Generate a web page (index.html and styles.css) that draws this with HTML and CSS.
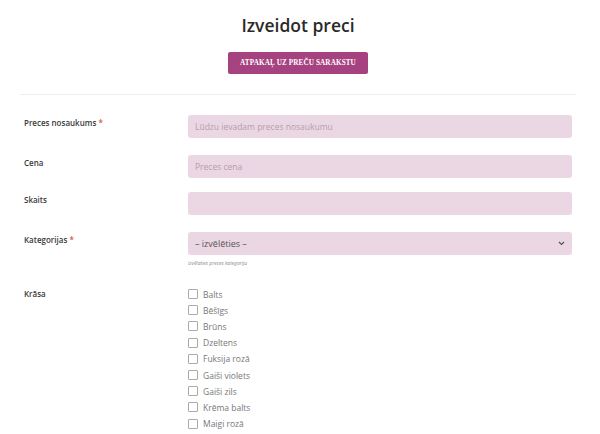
FILE: index.html
```html
<!DOCTYPE html>
<html lang="lv">
<head>
    <meta charset="UTF-8">
    <meta name="viewport" content="width=device-width, initial-scale=1.0">
    <title>Izveidot preci</title>
    <link rel="stylesheet" href="styles.css">
</head>
<body>
    <div class="page">
        <header class="top">
            <h1>Izveidot preci</h1>
            <a class="back" href="#">Atpakaļ uz preču sarakstu</a>
        </header>

        <form class="form">
            <div class="row row-name">
                <label>Preces nosaukums <span class="req">*</span></label>
                <input class="field" type="text" placeholder="Lūdzu ievadam preces nosaukumu">
            </div>
            <div class="row row-price">
                <label>Cena</label>
                <input class="field" type="text" placeholder="Preces cena">
            </div>
            <div class="row row-qty">
                <label>Skaits</label>
                <input class="field" type="text">
            </div>
            <div class="row row-cat">
                <label>Kategorijas <span class="req">*</span></label>
                <div>
                    <div class="field select">
                        <span>– izvēlēties –</span>
                        <svg width="7" height="5" viewBox="0 0 7 5"><path d="M1 1l2.5 2.5L6 1" fill="none" stroke="#555" stroke-width="1.2"/></svg>
                    </div>
                    <p class="help">Izvēlaties preces kategoriju</p>
                </div>
            </div>
            <div class="row row-color">
                <label>Krāsa</label>
                <ul class="checks">
                    <li><span class="box"></span>Balts</li>
                    <li><span class="box"></span>Bēšīgs</li>
                    <li><span class="box"></span>Brūns</li>
                    <li><span class="box"></span>Dzeltens</li>
                    <li><span class="box"></span>Fuksija rozā</li>
                    <li><span class="box"></span>Gaiši violets</li>
                    <li><span class="box"></span>Gaiši zils</li>
                    <li><span class="box"></span>Krēma balts</li>
                    <li><span class="box"></span>Maigi rozā</li>
                </ul>
            </div>
        </form>
    </div>
</body>
</html>
```

FILE: styles.css
```css
* {
    margin: 0;
    padding: 0;
    box-sizing: border-box;
}

body {
    font-family: 'Open Sans', 'Noto Sans', sans-serif;
    color: #333;
    background: #fff;
}

.page {
    margin: 0 24px 0 20px;
}

.top {
    text-align: center;
    padding-top: 12px;
    padding-bottom: 20px;
    border-bottom: 1px solid #eee;
}

h1 {
    font-size: 17.5px;
    line-height: 26px;
    font-weight: 600;
    color: #2a2a2a;
}

.back {
    display: inline-block;
    margin-top: 14px;
    width: 140px;
    height: 22px;
    line-height: 22px;
    background-color: #a5427f;
    color: #fff;
    border-radius: 2px;
    text-decoration: none;
    text-transform: uppercase;
    font-family: 'Liberation Serif', serif;
    font-weight: bold;
    font-size: 7.2px;
    letter-spacing: 0.1px;
}

.form {
    padding: 20px 4px 0 4px;
}

.row {
    display: grid;
    grid-template-columns: 164px 1fr;
    margin-bottom: 17px;
}

.row-price {
    margin-bottom: 14px;
}

.row-cat {
    margin-bottom: 20px;
}

.row label {
    font-size: 8px;
    line-height: 13px;
    font-weight: 600;
    padding-top: 1px;
    color: #3a3a3a;
}

.req {
    color: #d9534f;
}

.field {
    width: 100%;
    height: 23px;
    border: none;
    border-radius: 3px;
    background-color: #ebd6e3;
    padding: 0 7px;
    font-family: inherit;
    font-size: 8.5px;
    color: #555;
    outline: none;
}

.field::placeholder {
    color: #b59fac;
}

.select {
    display: flex;
    align-items: center;
    justify-content: space-between;
    color: #555;
    font-size: 9px;
}

.help {
    margin-top: 5px;
    font-size: 5px;
    font-style: italic;
    color: #888;
}

.checks {
    list-style: none;
}

.checks li {
    display: flex;
    align-items: center;
    height: 16.2px;
    font-size: 8.5px;
    color: #777;
}

.box {
    width: 10px;
    height: 10px;
    border: 1px solid #aaa;
    border-radius: 1px;
    margin-right: 5px;
    background: #fff;
}
```
